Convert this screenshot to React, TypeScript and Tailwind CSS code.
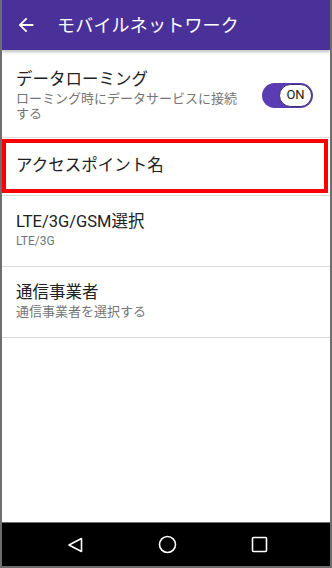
import React from 'react';

const font = { fontFamily: 'Roboto, "Noto Sans CJK JP", sans-serif' };

const Divider: React.FC = () => <div className="h-px bg-[#dadada]" />;

const App: React.FC = () => {
    return (
        <div className="w-[332px] h-[568px] flex flex-col bg-white border-x-2 border-b-2 border-[#6e6e6e] overflow-hidden" style={font}>
            {/* app bar */}
            <header className="relative z-10 h-[50px] shrink-0 bg-[#4a3199] flex items-center pl-[13px] shadow-[0_2px_3px_rgba(0,0,0,0.25)]">
                <svg width="22" height="22" viewBox="0 0 24 24" fill="white">
                    <path d="M20 11H7.83l5.59-5.59L12 4l-8 8 8 8 1.41-1.41L7.83 13H20v-2z" />
                </svg>
                <h1 className="ml-[20px] text-white text-[18px] leading-none tracking-[0.2px] pt-[2px]">モバイルネットワーク</h1>
            </header>

            {/* data roaming */}
            <div className="flex items-center pl-[14px] pr-[17px] pt-[19px] pb-[16px]">
                <div className="flex-1 pr-[16px]">
                    <p className="text-[16.5px] leading-[22px] text-[#212121]">データローミング</p>
                    <p className="text-[13px] leading-[15px] text-[#757575]">ローミング時にデータサービスに接続する</p>
                </div>
                <div className="w-[51px] h-[25px] rounded-full bg-[#5a3db3] flex items-center justify-end pr-px">
                    <div className="w-[33px] h-[23px] rounded-full bg-white border border-[#3a2a70] flex items-center justify-center text-[13px] text-[#212121]">ON</div>
                </div>
            </div>
            <Divider />

            {/* access point */}
            <div className="relative h-[57px] flex items-center pl-[14px]">
                <p className="text-[16.5px] text-[#212121]">アクセスポイント名</p>
                <div className="absolute top-px left-0 right-[2px] h-[54px] border-4 border-[#ff0000]" />
            </div>
            <Divider />

            {/* network type */}
            <div className="pl-[14px] pt-[15px] pb-[17px]">
                <p className="text-[16.5px] leading-[22px] text-[#212121]">LTE/3G/GSM選択</p>
                <p className="text-[12px] leading-[16px] text-[#757575]">LTE/3G</p>
            </div>
            <Divider />

            {/* carrier */}
            <div className="pl-[14px] pt-[15px] pb-[17px]">
                <p className="text-[16.5px] leading-[22px] text-[#212121]">通信事業者</p>
                <p className="text-[13px] leading-[16px] text-[#757575]">通信事業者を選択する</p>
            </div>
            <Divider />

            <div className="flex-1" />

            {/* nav bar */}
            <nav className="h-[44px] shrink-0 bg-black border-t border-[#6e6e6e] flex items-center">
                <div className="w-full flex items-center justify-between pl-[64px] pr-[62px]">
                    <svg width="18" height="18" viewBox="0 0 18 18" fill="none" stroke="white" strokeWidth="1.6" strokeLinejoin="round">
                        <path d="M15.5 2.5 L15.5 15.5 L3 9 Z" />
                    </svg>
                    <svg width="19" height="19" viewBox="0 0 19 19" fill="none" stroke="white" strokeWidth="1.6">
                        <circle cx="9.5" cy="9.5" r="8" />
                    </svg>
                    <svg width="17" height="17" viewBox="0 0 17 17" fill="none" stroke="white" strokeWidth="1.6">
                        <rect x="1.5" y="1.5" width="14" height="14" rx="1" />
                    </svg>
                </div>
            </nav>
        </div>
    );
};

export default App;
